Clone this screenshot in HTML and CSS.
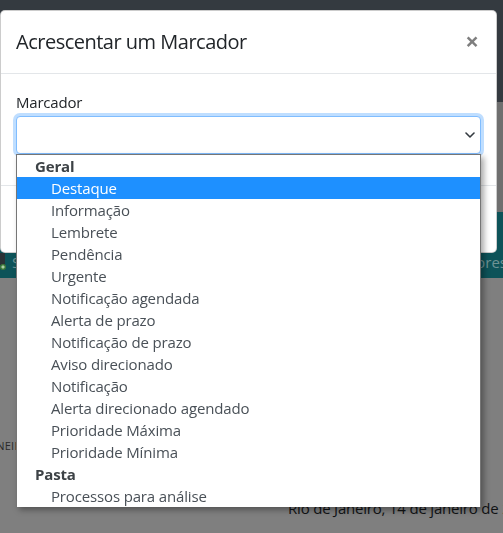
FILE: index.html
```html
<!DOCTYPE html>
<html lang="pt-BR">
<head>
<meta charset="utf-8">
<title>Acrescentar um Marcador</title>
<link rel="stylesheet" href="styles.css">
</head>
<body>
<div class="page">
  <div class="topbar"></div>
  <div class="band-gray"></div>
  <div class="navbar2">
    <span class="nav-left"><svg class="nav-icon" width="6" height="18" viewBox="0 0 6 18"><rect x="0" y="0" width="5" height="12" fill="#2b3236"/><circle cx="3" cy="14" r="3" fill="#3f7a3a"/><path d="M3 12.3v3.4M1.3 14h3.4" stroke="#cfe8c8" stroke-width="1"/></svg>S</span>
    <span class="nav-right">pres</span>
  </div>
  <div class="content">
    <div class="city">JANEIRO</div>
    <div class="date">Rio de Janeiro, 14 de janeiro de 2021</div>
  </div>
</div>

<div class="modal-layer">
  <div class="modal">
    <div class="modal-header">
      <h5 class="modal-title">Acrescentar um Marcador</h5>
      <button class="close" type="button">×</button>
    </div>
    <div class="modal-body">
      <div class="form-group">
        <label class="form-label">Marcador</label>
        <div class="select-wrap">
          <div class="select">
            <svg class="chevron" width="10" height="6" viewBox="0 0 10 6"><path d="M1 1l4 4 4-4" fill="none" stroke="#343a40" stroke-width="1.6" stroke-linecap="round" stroke-linejoin="round"/></svg>
          </div>
          <div class="popup">
            <div class="group">Geral</div>
            <div class="opt selected">Destaque</div>
            <div class="opt">Informação</div>
            <div class="opt">Lembrete</div>
            <div class="opt">Pendência</div>
            <div class="opt">Urgente</div>
            <div class="opt">Notificação agendada</div>
            <div class="opt">Alerta de prazo</div>
            <div class="opt">Notificação de prazo</div>
            <div class="opt">Aviso direcionado</div>
            <div class="opt">Notificação</div>
            <div class="opt">Alerta direcionado agendado</div>
            <div class="opt">Prioridade Máxima</div>
            <div class="opt">Prioridade Mínima</div>
            <div class="group">Pasta</div>
            <div class="opt">Processos para análise</div>
          </div>
        </div>
      </div>
    </div>
    <div class="modal-footer"></div>
  </div>
</div>
</body>
</html>
```

FILE: styles.css
```css
html, body {
  margin: 0;
  padding: 0;
}
body {
  width: 503px;
  height: 533px;
  overflow: hidden;
  background: #7f7f7f;
  font-family: "Open Sans", "Noto Sans", sans-serif;
}

/* background page (already dimmed by the backdrop) */
.topbar {
  height: 102px;
  background: #343a40;
}
.band-gray {
  height: 110px;
  background: #6f6f6f;
}
.navbar2 {
  height: 66px;
  background: #0d5359;
  display: flex;
  justify-content: space-between;
  align-items: flex-end;
  padding-bottom: 6px;
  box-sizing: border-box;
  color: #6d9294;
  font-size: 15px;
  line-height: 20px;
}
.nav-left {
  display: flex;
  align-items: center;
  gap: 6px;
}
.nav-right {
  margin-right: -4px;
}
.content {
  padding-top: 160px;
}
.city {
  margin-left: -14px;
  font-size: 11px;
  line-height: 15px;
  color: #2a2a2a;
  letter-spacing: 0.2px;
}
.date {
  margin-top: 44px;
  padding-left: 288px;
  white-space: nowrap;
  font-size: 15px;
  line-height: 22px;
  letter-spacing: -0.2px;
  color: #111315;
}

/* modal */
.modal-layer {
  position: fixed;
  inset: 0;
}
.modal {
  margin-top: 10px;
  width: 497px;
  box-sizing: border-box;
  background: #fff;
  border: 1px solid rgba(0, 0, 0, 0.2);
  border-radius: 5px;
}
.modal-header {
  display: flex;
  align-items: flex-start;
  padding: 16px 15px;
  border-bottom: 1px solid #e3e6e9;
}
.modal-title {
  margin: 0;
  font-size: 20px;
  line-height: 30px;
  font-weight: 500;
  letter-spacing: -0.5px;
  color: #212529;
}
.close {
  margin: -16px -15px -16px auto;
  padding: 18px 17px 14px;
  background: none;
  border: 0;
  font-family: "Open Sans", sans-serif;
  font-size: 24px;
  font-weight: 700;
  line-height: 1;
  color: #000;
  opacity: 0.5;
}
.modal-body {
  padding: 16px 15px;
}
.form-group {
  margin-bottom: 15px;
}
.form-label {
  display: block;
  font-size: 15px;
  line-height: 24px;
  letter-spacing: -0.2px;
  color: #212529;
  margin-bottom: 2px;
}
.select-wrap {
  position: relative;
}
.select {
  height: 38px;
  box-sizing: border-box;
  border: 1px solid #80bdff;
  border-radius: 4px;
  box-shadow: 0 0 0 3px rgba(0, 123, 255, 0.25);
  display: flex;
  align-items: center;
  justify-content: flex-end;
  padding-right: 5px;
  background: #fff;
}
.chevron {
  display: block;
}
.popup {
  position: absolute;
  top: 38px;
  left: 0;
  width: 465px;
  box-sizing: border-box;
  background: #fff;
  border: 1px solid #767676;
  border-bottom: 0;
  box-shadow: 3px 3px 6px rgba(0, 0, 0, 0.35);
  z-index: 5;
}
.group,
.opt {
  height: 22px;
  line-height: 22px;
  font-size: 15px;
  letter-spacing: -0.15px;
  color: #495057;
  white-space: nowrap;
}
.group {
  padding-left: 18px;
  font-weight: 700;
  color: #3d4246;
}
.opt {
  padding-left: 34px;
}
.opt.selected {
  background: #1e90ff;
  color: #fff;
}
.modal-footer {
  height: 66px;
  border-top: 1px solid #e3e6e9;
}
```
